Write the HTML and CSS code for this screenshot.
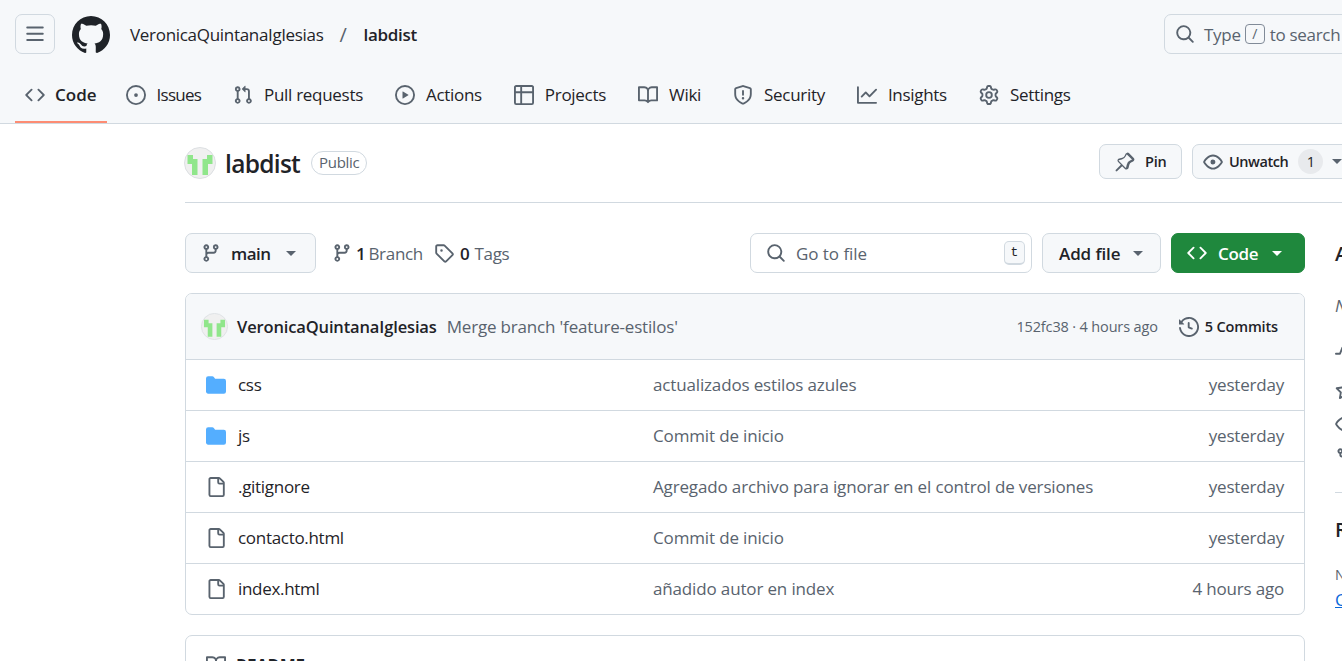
FILE: index.html
```html
<!DOCTYPE html>
<html lang="en">
<head>
    <meta charset="UTF-8">
    <meta name="viewport" content="width=device-width, initial-scale=1.0">
    <title>VeronicaQuintanaIglesias/labdist</title>
    <link rel="stylesheet" href="styles.css">
</head>
<body>

    <!-- Icon sheet -->
    <svg class="icon-sheet" xmlns="http://www.w3.org/2000/svg">
        <symbol id="i-bars" viewBox="0 0 16 16"><path d="M1 2.75A.75.75 0 0 1 1.75 2h12.5a.75.75 0 0 1 0 1.5H1.75A.75.75 0 0 1 1 2.75Zm0 5A.75.75 0 0 1 1.75 7h12.5a.75.75 0 0 1 0 1.5H1.75A.75.75 0 0 1 1 7.75ZM1.75 12h12.5a.75.75 0 0 1 0 1.5H1.75a.75.75 0 0 1 0-1.5Z"/></symbol>
        <symbol id="i-mark" viewBox="0 0 16 16"><path d="M8 0c4.42 0 8 3.58 8 8a8.013 8.013 0 0 1-5.45 7.59c-.4.08-.55-.17-.55-.38 0-.27.01-1.13.01-2.2 0-.75-.25-1.23-.54-1.48 1.78-.2 3.65-.88 3.65-3.95 0-.88-.31-1.59-.82-2.15.08-.2.36-1.02-.08-2.12 0 0-.67-.22-2.2.82-.64-.18-1.32-.27-2-.27-.68 0-1.36.09-2 .27-1.53-1.03-2.2-.82-2.2-.82-.44 1.1-.16 1.92-.08 2.12-.51.56-.82 1.28-.82 2.15 0 3.06 1.86 3.75 3.64 3.95-.23.2-.44.55-.51 1.07-.46.21-1.61.55-2.33-.66-.15-.24-.6-.83-1.23-.82-.67.01-.27.38.01.53.34.19.73.9.82 1.13.16.45.68 1.31 2.69.94 0 .67.01 1.3.01 1.49 0 .21-.15.45-.55.38A7.995 7.995 0 0 1 0 8c0-4.42 3.58-8 8-8Z"/></symbol>
        <symbol id="i-code" viewBox="0 0 16 16"><path d="m11.28 3.22 4.25 4.25a.75.75 0 0 1 0 1.06l-4.25 4.25a.749.749 0 0 1-1.275-.326.749.749 0 0 1 .215-.734L13.94 8l-3.72-3.72a.749.749 0 0 1 .326-1.275.749.749 0 0 1 .734.215Zm-6.56 0a.751.751 0 0 1 1.042.018.751.751 0 0 1 .018 1.042L2.06 8l3.72 3.72a.749.749 0 0 1-.326 1.275.749.749 0 0 1-.734-.215L.47 8.53a.75.75 0 0 1 0-1.06Z"/></symbol>
        <symbol id="i-issue" viewBox="0 0 16 16"><path d="M8 9.5a1.5 1.5 0 1 0 0-3 1.5 1.5 0 0 0 0 3Z"/><path d="M8 0a8 8 0 1 1 0 16A8 8 0 0 1 8 0ZM1.5 8a6.5 6.5 0 1 0 13 0 6.5 6.5 0 0 0-13 0Z"/></symbol>
        <symbol id="i-pull" viewBox="0 0 16 16"><path d="M1.5 3.25a2.25 2.25 0 1 1 3 2.122v5.256a2.251 2.251 0 1 1-1.5 0V5.372A2.25 2.25 0 0 1 1.5 3.25Zm5.677-.177L9.573.677A.25.25 0 0 1 10 .854V2.5h1A2.5 2.5 0 0 1 13.5 5v5.628a2.251 2.251 0 1 1-1.5 0V5a1 1 0 0 0-1-1h-1v1.646a.25.25 0 0 1-.427.177L7.177 3.427a.25.25 0 0 1 0-.354ZM3.75 2.5a.75.75 0 1 0 0 1.5.75.75 0 0 0 0-1.5Zm0 9.5a.75.75 0 1 0 0 1.5.75.75 0 0 0 0-1.5Zm8.25.75a.75.75 0 1 0 1.5 0 .75.75 0 0 0-1.5 0Z"/></symbol>
        <symbol id="i-play" viewBox="0 0 16 16"><path d="M8 0a8 8 0 1 1 0 16A8 8 0 0 1 8 0ZM1.5 8a6.5 6.5 0 1 0 13 0 6.5 6.5 0 0 0-13 0Zm4.879-2.773 4.264 2.559a.25.25 0 0 1 0 .428l-4.264 2.559A.25.25 0 0 1 6 10.559V5.442a.25.25 0 0 1 .379-.215Z"/></symbol>
        <symbol id="i-table" viewBox="0 0 16 16"><path d="M0 1.75C0 .784.784 0 1.75 0h12.5C15.216 0 16 .784 16 1.75v12.5A1.75 1.75 0 0 1 14.25 16H1.75A1.75 1.75 0 0 1 0 14.25ZM6.5 6.5v8h7.75a.25.25 0 0 0 .25-.25V6.5Zm8-1.5V1.75a.25.25 0 0 0-.25-.25H6.5V5Zm-13 1.5v7.75c0 .138.112.25.25.25H5v-8ZM5 5V1.5H1.75a.25.25 0 0 0-.25.25V5Z"/></symbol>
        <symbol id="i-book" viewBox="0 0 16 16"><path d="M0 1.75A.75.75 0 0 1 .75 1h4.253c1.227 0 2.317.59 3 1.501A3.743 3.743 0 0 1 11.006 1h4.245a.75.75 0 0 1 .75.75v10.5a.75.75 0 0 1-.75.75h-4.507a2.25 2.25 0 0 0-1.591.659l-.622.621a.75.75 0 0 1-1.06 0l-.622-.621A2.25 2.25 0 0 0 5.258 13H.75a.75.75 0 0 1-.75-.75Zm7.251 10.324.004-5.073-.002-2.253A2.25 2.25 0 0 0 5.003 2.5H1.5v9h3.757a3.75 3.75 0 0 1 1.994.574ZM8.755 4.75l-.004 7.322a3.752 3.752 0 0 1 1.992-.572H14.5v-9h-3.495a2.25 2.25 0 0 0-2.25 2.25Z"/></symbol>
        <symbol id="i-shield" viewBox="0 0 16 16"><path d="M7.467.133a1.748 1.748 0 0 1 1.066 0l5.25 1.68A1.75 1.75 0 0 1 15 3.48V7c0 1.566-.32 3.182-1.303 4.682-.983 1.498-2.585 2.813-5.032 3.855a1.697 1.697 0 0 1-1.33 0c-2.447-1.042-4.049-2.357-5.032-3.855C1.32 10.182 1 8.566 1 7V3.48a1.75 1.75 0 0 1 1.217-1.667Zm.61 1.429a.25.25 0 0 0-.153 0l-5.25 1.68a.25.25 0 0 0-.174.238V7c0 1.358.275 2.666 1.057 3.86.784 1.194 2.121 2.34 4.366 3.297a.196.196 0 0 0 .154 0c2.245-.956 3.582-2.104 4.366-3.298C13.225 9.666 13.5 8.36 13.5 7V3.48a.251.251 0 0 0-.174-.237l-5.25-1.68ZM8.75 4.75v3a.75.75 0 0 1-1.5 0v-3a.75.75 0 0 1 1.5 0ZM9 10.5a1 1 0 1 1-2 0 1 1 0 0 1 2 0Z"/></symbol>
        <symbol id="i-graph" viewBox="0 0 16 16"><path d="M1.5 1.75V13.5h13.75a.75.75 0 0 1 0 1.5H.75a.75.75 0 0 1-.75-.75V1.75a.75.75 0 0 1 1.5 0Zm14.28 2.53-5.25 5.25a.75.75 0 0 1-1.06 0L7 7.06 4.28 9.78a.751.751 0 0 1-1.042-.018.751.751 0 0 1-.018-1.042l3.25-3.25a.75.75 0 0 1 1.06 0L10 7.94l4.72-4.72a.751.751 0 0 1 1.042.018.751.751 0 0 1 .018 1.042Z"/></symbol>
        <symbol id="i-gear" viewBox="0 0 16 16"><path d="M8 0a8.2 8.2 0 0 1 .701.031C9.444.095 9.99.645 10.16 1.29l.288 1.107c.018.066.079.158.212.224.231.114.454.243.668.386.123.082.233.09.299.071l1.103-.303c.644-.176 1.392.021 1.82.63.27.385.506.792.704 1.218.315.675.111 1.422-.364 1.891l-.814.806c-.049.048-.098.147-.088.294.016.257.016.515 0 .772-.01.147.038.246.088.294l.814.806c.475.469.679 1.216.364 1.891a7.977 7.977 0 0 1-.704 1.217c-.428.61-1.176.807-1.82.63l-1.102-.302c-.067-.019-.177-.011-.3.071a5.909 5.909 0 0 1-.668.386c-.133.066-.194.158-.211.224l-.29 1.106c-.168.646-.715 1.196-1.458 1.26a8.006 8.006 0 0 1-1.402 0c-.743-.064-1.289-.614-1.458-1.26l-.289-1.106c-.018-.066-.079-.158-.212-.224a5.738 5.738 0 0 1-.668-.386c-.123-.082-.233-.09-.299-.071l-1.103.303c-.644.176-1.392-.021-1.82-.63a8.12 8.12 0 0 1-.704-1.218c-.315-.675-.111-1.422.363-1.891l.815-.806c.05-.048.098-.147.088-.294a6.214 6.214 0 0 1 0-.772c.01-.147-.038-.246-.088-.294l-.815-.806C.635 6.045.431 5.298.746 4.623a7.92 7.92 0 0 1 .704-1.217c.428-.61 1.176-.807 1.82-.63l1.102.302c.067.019.177.011.3-.071.214-.143.437-.272.668-.386.133-.066.194-.158.211-.224l.29-1.106C6.009.645 6.556.095 7.299.03 7.53.01 7.764 0 8 0Zm-.571 1.525c-.036.003-.108.036-.137.146l-.289 1.105c-.147.561-.549.967-.998 1.189-.173.086-.34.183-.5.29-.417.278-.97.423-1.529.27l-1.103-.303c-.109-.03-.175.016-.195.045-.22.312-.412.644-.573.99-.014.031-.021.11.059.19l.815.806c.411.406.562.957.53 1.456a4.709 4.709 0 0 0 0 .582c.032.499-.119 1.05-.53 1.456l-.815.806c-.081.08-.073.159-.059.19.162.346.353.677.573.989.02.03.085.076.195.046l1.102-.303c.56-.153 1.113-.008 1.53.27.161.107.328.204.501.29.447.222.85.629.997 1.189l.289 1.105c.029.109.101.143.137.146a6.6 6.6 0 0 0 1.142 0c.036-.003.108-.036.137-.146l.289-1.105c.147-.561.549-.967.998-1.189.173-.086.34-.183.5-.29.417-.278.97-.423 1.529-.27l1.103.303c.109.029.175-.016.195-.045.22-.313.411-.644.573-.99.014-.031.021-.11-.059-.19l-.815-.806c-.411-.406-.562-.957-.53-1.456a4.709 4.709 0 0 0 0-.582c-.032-.499.119-1.05.53-1.456l.815-.806c.081-.08.073-.159.059-.19a6.464 6.464 0 0 0-.573-.989c-.02-.03-.085-.076-.195-.046l-1.102.303c-.56.153-1.113.008-1.53-.27a4.44 4.44 0 0 0-.501-.29c-.447-.222-.85-.629-.997-1.189l-.289-1.105c-.029-.11-.101-.143-.137-.146a6.6 6.6 0 0 0-1.142 0ZM11 8a3 3 0 1 1-6 0 3 3 0 0 1 6 0ZM9.5 8a1.5 1.5 0 1 0-3.001.001A1.5 1.5 0 0 0 9.5 8Z"/></symbol>
        <symbol id="i-search" viewBox="0 0 16 16"><path d="M10.68 11.74a6 6 0 0 1-7.922-8.982 6 6 0 0 1 8.982 7.922l3.04 3.04a.749.749 0 0 1-.326 1.275.749.749 0 0 1-.734-.215ZM11.5 7a4.499 4.499 0 1 0-8.997 0A4.499 4.499 0 0 0 11.5 7Z"/></symbol>
        <symbol id="i-pin" viewBox="0 0 16 16"><path d="m11.294.984 3.722 3.722a1.75 1.75 0 0 1-.504 2.826l-1.327.613a3.089 3.089 0 0 0-1.707 2.084l-.584 2.454c-.317 1.332-1.972 1.8-2.94.832L5.75 11.311 1.78 15.28a.749.749 0 0 1-1.275-.326.749.749 0 0 1 .215-.734L4.69 10.25 2.487 8.048c-.968-.968-.5-2.623.832-2.94l2.454-.584a3.089 3.089 0 0 0 2.084-1.707l.613-1.327a1.75 1.75 0 0 1 2.824-.506Zm-2.07 1.17-.612 1.326a4.59 4.59 0 0 1-3.097 2.537l-2.454.584a.25.25 0 0 0-.118.42l5.5 5.5a.25.25 0 0 0 .42-.118l.584-2.454a4.59 4.59 0 0 1 2.537-3.097l1.326-.611a.25.25 0 0 0 .072-.404l-3.722-3.722a.25.25 0 0 0-.404.072Z"/></symbol>
        <symbol id="i-eye" viewBox="0 0 16 16"><path d="M8 2c1.981 0 3.671.992 4.933 2.078 1.27 1.091 2.187 2.345 2.637 3.023a1.62 1.62 0 0 1 0 1.798c-.45.678-1.367 1.932-2.637 3.023C11.67 13.008 9.981 14 8 14c-1.981 0-3.671-.992-4.933-2.078C1.797 10.83.88 9.576.43 8.898a1.62 1.62 0 0 1 0-1.798c.45-.677 1.367-1.931 2.637-3.022C4.33 2.992 6.019 2 8 2ZM1.679 7.932a.12.12 0 0 0 0 .136c.411.622 1.241 1.75 2.366 2.717C5.176 11.758 6.527 12.5 8 12.5c1.473 0 2.825-.742 3.955-1.715 1.124-.967 1.954-2.096 2.366-2.717a.12.12 0 0 0 0-.136c-.412-.621-1.242-1.75-2.366-2.717C10.824 4.242 9.473 3.5 8 3.5c-1.473 0-2.825.742-3.955 1.715-1.124.967-1.954 2.096-2.366 2.717ZM8 10a2 2 0 1 1-.001-3.999A2 2 0 0 1 8 10Z"/></symbol>
        <symbol id="i-branch" viewBox="0 0 16 16"><path d="M9.5 3.25a2.25 2.25 0 1 1 3 2.122V6A2.5 2.5 0 0 1 10 8.5H6a1 1 0 0 0-1 1v1.128a2.251 2.251 0 1 1-1.5 0V5.372a2.25 2.25 0 1 1 1.5 0v1.836A2.493 2.493 0 0 1 6 7h4a1 1 0 0 0 1-1v-.628A2.25 2.25 0 0 1 9.5 3.25Zm-6 0a.75.75 0 1 0 1.5 0 .75.75 0 0 0-1.5 0Zm8.25-.75a.75.75 0 1 0 0 1.5.75.75 0 0 0 0-1.5ZM4.25 12a.75.75 0 1 0 0 1.5.75.75 0 0 0 0-1.5Z"/></symbol>
        <symbol id="i-tag" viewBox="0 0 16 16"><path d="M1 7.775V2.75C1 1.784 1.784 1 2.75 1h5.025c.464 0 .91.184 1.238.513l6.25 6.25a1.75 1.75 0 0 1 0 2.474l-5.026 5.026a1.75 1.75 0 0 1-2.474 0l-6.25-6.25A1.752 1.752 0 0 1 1 7.775Zm1.5 0c0 .066.026.13.073.177l6.25 6.25a.25.25 0 0 0 .354 0l5.025-5.025a.25.25 0 0 0 0-.354l-6.25-6.25a.25.25 0 0 0-.177-.073H2.75a.25.25 0 0 0-.25.25ZM6 5a1 1 0 1 1 0 2 1 1 0 0 1 0-2Z"/></symbol>
        <symbol id="i-history" viewBox="0 0 16 16"><path d="m.427 1.927 1.215 1.215a8.002 8.002 0 1 1-1.6 5.685.75.75 0 1 1 1.493-.154 6.5 6.5 0 1 0 1.18-4.458l1.358 1.358A.25.25 0 0 1 3.896 6H.25A.25.25 0 0 1 0 5.75V2.104a.25.25 0 0 1 .427-.177ZM7.75 4a.75.75 0 0 1 .75.75v2.992l2.028.812a.75.75 0 0 1-.557 1.392l-2.5-1A.751.751 0 0 1 7 8.25v-3.5A.75.75 0 0 1 7.75 4Z"/></symbol>
        <symbol id="i-folder" viewBox="0 0 16 16"><path d="M1.75 1A1.75 1.75 0 0 0 0 2.75v10.5C0 14.216.784 15 1.75 15h12.5A1.75 1.75 0 0 0 16 13.25v-8.5A1.75 1.75 0 0 0 14.25 3H7.5a.25.25 0 0 1-.2-.1l-.9-1.2C6.07 1.26 5.55 1 5 1H1.75Z"/></symbol>
        <symbol id="i-file" viewBox="0 0 16 16"><path d="M2 1.75C2 .784 2.784 0 3.75 0h6.586c.464 0 .909.184 1.237.513l2.914 2.914c.329.328.513.773.513 1.237v9.586A1.75 1.75 0 0 1 13.25 16h-9.5A1.75 1.75 0 0 1 2 14.25Zm1.75-.25a.25.25 0 0 0-.25.25v12.5c0 .138.112.25.25.25h9.5a.25.25 0 0 0 .25-.25V6h-2.75A1.75 1.75 0 0 1 9 4.25V1.5Zm6.75.062V4.25c0 .138.112.25.25.25h2.688l-.011-.013-2.914-2.914-.013-.011Z"/></symbol>
        <symbol id="i-pulse" viewBox="0 0 16 16"><path d="M6 2c.306 0 .582.187.696.471L10 10.731l1.304-3.26A.751.751 0 0 1 12 7h3.25a.75.75 0 0 1 0 1.5h-2.742l-1.812 4.528a.751.751 0 0 1-1.392 0L6 4.77 4.696 8.03A.75.75 0 0 1 4 8.5H.75a.75.75 0 0 1 0-1.5h2.742l1.812-4.529A.751.751 0 0 1 6 2Z"/></symbol>
        <symbol id="i-star" viewBox="0 0 16 16"><path d="M8 .25a.75.75 0 0 1 .673.418l1.882 3.815 4.21.612a.75.75 0 0 1 .416 1.279l-3.046 2.97.719 4.192a.751.751 0 0 1-1.088.791L8 12.347l-3.766 1.98a.75.75 0 0 1-1.088-.79l.72-4.194L.818 6.374a.75.75 0 0 1 .416-1.28l4.21-.611L7.327.668A.75.75 0 0 1 8 .25Zm0 2.445L6.615 5.5a.75.75 0 0 1-.564.41l-3.097.45 2.24 2.184a.75.75 0 0 1 .216.664l-.528 3.084 2.769-1.456a.75.75 0 0 1 .698 0l2.77 1.456-.53-3.084a.75.75 0 0 1 .216-.664l2.24-2.183-3.096-.45a.75.75 0 0 1-.564-.41L8 2.694Z"/></symbol>
        <symbol id="i-fork" viewBox="0 0 16 16"><path d="M5 5.372v.878c0 .414.336.75.75.75h4.5a.75.75 0 0 0 .75-.75v-.878a2.25 2.25 0 1 1 1.5 0v.878a2.25 2.25 0 0 1-2.25 2.25h-1.5v2.128a2.251 2.251 0 1 1-1.5 0V8.5h-1.5A2.25 2.25 0 0 1 3.5 6.25v-.878a2.25 2.25 0 1 1 1.5 0ZM5 3.25a.75.75 0 1 0-1.5 0 .75.75 0 0 0 1.5 0Zm6.75.75a.75.75 0 1 0 0-1.5.75.75 0 0 0 0 1.5Zm-3 8.75a.75.75 0 1 0-1.5 0 .75.75 0 0 0 1.5 0Z"/></symbol>
        <symbol id="i-avatar" viewBox="0 0 32 32">
            <circle cx="16" cy="16" r="15.5" fill="#f0f0f0" stroke="#dcdfe2"/>
            <path fill="#90e68b" d="M3.5 8H9v4h4.5v16H8V17H3.5ZM28.5 8H23v4h-4.5v16H24V17h4.5Z"/>
        </symbol>
    </svg>

    <!-- Barra superior -->
    <header class="top">
        <div class="top-row">
            <button class="icon-btn"><svg class="ico"><use href="#i-bars"/></svg></button>
            <svg class="logo"><use href="#i-mark"/></svg>
            <span class="crumb">VeronicaQuintanaIglesias</span>
            <span class="crumb-sep">/</span>
            <strong class="crumb-repo">labdist</strong>
            <div class="top-search">
                <svg class="ico"><use href="#i-search"/></svg>
                <span>Type</span><kbd class="slash">/</kbd><span>to search</span>
            </div>
        </div>
        <nav class="tabs">
            <a class="tab tab-active"><svg class="ico"><use href="#i-code"/></svg>Code</a>
            <a class="tab tab-issues"><svg class="ico"><use href="#i-issue"/></svg>Issues</a>
            <a class="tab"><svg class="ico"><use href="#i-pull"/></svg>Pull requests</a>
            <a class="tab"><svg class="ico"><use href="#i-play"/></svg>Actions</a>
            <a class="tab"><svg class="ico"><use href="#i-table"/></svg>Projects</a>
            <a class="tab"><svg class="ico"><use href="#i-book"/></svg>Wiki</a>
            <a class="tab"><svg class="ico"><use href="#i-shield"/></svg>Security</a>
            <a class="tab"><svg class="ico"><use href="#i-graph"/></svg>Insights</a>
            <a class="tab"><svg class="ico"><use href="#i-gear"/></svg>Settings</a>
        </nav>
    </header>

    <main class="page">
        <!-- Nombre del repositorio -->
        <div class="repo-head">
            <svg class="avatar"><use href="#i-avatar"/></svg>
            <h1 class="repo-name">labdist</h1>
            <span class="badge">Public</span>
            <button class="btn btn-small btn-pin"><svg class="ico"><use href="#i-pin"/></svg>Pin</button>
            <button class="btn btn-small btn-watch">
                <svg class="ico"><use href="#i-eye"/></svg>Unwatch<span class="count">1</span><i class="caret"></i>
            </button>
        </div>

        <div class="columns">
            <section class="content">
                <div class="toolbar">
                    <button class="btn btn-branch"><svg class="ico"><use href="#i-branch"/></svg>main<i class="caret"></i></button>
                    <a class="meta-link meta-branch"><svg class="ico"><use href="#i-branch"/></svg><b>1</b> Branch</a>
                    <a class="meta-link"><svg class="ico"><use href="#i-tag"/></svg><b>0</b> Tags</a>
                    <div class="go-file">
                        <svg class="ico"><use href="#i-search"/></svg>
                        <span>Go to file</span>
                        <kbd class="key-t">t</kbd>
                    </div>
                    <button class="btn btn-add">Add file<i class="caret"></i></button>
                    <button class="btn btn-code"><svg class="ico"><use href="#i-code"/></svg>Code<i class="caret"></i></button>
                </div>

                <!-- Lista de archivos -->
                <div class="files">
                    <div class="commit-row">
                        <svg class="avatar-small"><use href="#i-avatar"/></svg>
                        <strong class="commit-author">VeronicaQuintanaIglesias</strong>
                        <span class="commit-msg">Merge branch 'feature-estilos'</span>
                        <span class="commit-hash">152fc38 · 4 hours ago</span>
                        <span class="commit-count"><svg class="ico"><use href="#i-history"/></svg>5 Commits</span>
                    </div>
                    <div class="file-row">
                        <svg class="ico folder"><use href="#i-folder"/></svg>
                        <span class="file-name">css</span>
                        <span class="file-msg">actualizados estilos azules</span>
                        <span class="file-time">yesterday</span>
                    </div>
                    <div class="file-row">
                        <svg class="ico folder"><use href="#i-folder"/></svg>
                        <span class="file-name">js</span>
                        <span class="file-msg">Commit de inicio</span>
                        <span class="file-time">yesterday</span>
                    </div>
                    <div class="file-row">
                        <svg class="ico"><use href="#i-file"/></svg>
                        <span class="file-name">.gitignore</span>
                        <span class="file-msg">Agregado archivo para ignorar en el control de versiones</span>
                        <span class="file-time">yesterday</span>
                    </div>
                    <div class="file-row">
                        <svg class="ico"><use href="#i-file"/></svg>
                        <span class="file-name">contacto.html</span>
                        <span class="file-msg">Commit de inicio</span>
                        <span class="file-time">yesterday</span>
                    </div>
                    <div class="file-row">
                        <svg class="ico"><use href="#i-file"/></svg>
                        <span class="file-name">index.html</span>
                        <span class="file-msg">añadido autor en index</span>
                        <span class="file-time">4 hours ago</span>
                    </div>
                </div>

                <div class="readme">
                    <svg class="ico"><use href="#i-book"/></svg><strong>README</strong>
                </div>
            </section>

            <aside class="side">
                <h2 class="side-title">About</h2>
                <p class="side-desc">No description, website, or topics provided.</p>
                <ul class="side-list">
                    <li><svg class="ico"><use href="#i-pulse"/></svg>Activity</li>
                    <li><svg class="ico"><use href="#i-star"/></svg>0 stars</li>
                    <li><svg class="ico"><use href="#i-eye"/></svg>1 watching</li>
                    <li><svg class="ico"><use href="#i-fork"/></svg>0 forks</li>
                </ul>
                <h2 class="side-title side-releases">Releases</h2>
                <p class="side-note">No releases published</p>
                <a class="side-link">Create a new release</a>
            </aside>
        </div>
    </main>
</body>
</html>
```

FILE: styles.css
```css
* {
    box-sizing: border-box;
    margin: 0;
    padding: 0;
}

html, body {
    height: 100%;
    overflow: hidden;
}

body {
    font-family: 'Open Sans', 'Noto Sans', sans-serif;
    font-size: 17px;
    letter-spacing: -0.3px;
    color: #1f2328;
    background-color: #fff;
}

button {
    font: inherit;
    letter-spacing: inherit;
    color: inherit;
}

.icon-sheet {
    display: none;
}

.ico {
    width: 20px;
    height: 20px;
    fill: #59636e;
    flex: none;
}

/* Barra superior */
.top {
    height: 124px;
    background-color: #f6f8fa;
    border-bottom: 1px solid #d1d9e0;
    padding: 14px 0 0 15px;
}

.top-row {
    display: flex;
    align-items: center;
    height: 40px;
}

.icon-btn {
    width: 40px;
    height: 40px;
    display: flex;
    align-items: center;
    justify-content: center;
    background: transparent;
    border: 1px solid #d1d9e0;
    border-radius: 7px;
}

.logo {
    width: 38px;
    height: 38px;
    margin: 2px 20px 0 17px;
    fill: #1f2328;
}

.crumb-sep {
    margin: 0 17px 0 16px;
    color: #59636e;
    font-size: 20px;
}

.crumb-repo {
    font-weight: 600;
}

.top-search {
    display: flex;
    align-items: center;
    width: 190px;
    height: 40px;
    margin-left: auto;
    margin-right: -12px;
    padding-left: 10px;
    border: 1px solid #d1d9e0;
    border-radius: 7px;
    color: #59636e;
    white-space: nowrap;
}

.top-search .ico {
    margin-right: 9px;
}

.slash {
    width: 20px;
    height: 20px;
    margin: 0 5px 0 4px;
    border: 1px solid #818b98;
    border-radius: 4px;
    font: inherit;
    font-size: 14px;
    line-height: 18px;
    text-align: center;
}

.tabs {
    display: flex;
    gap: 12px;
    margin-top: 16px;
}

.tab {
    display: flex;
    align-items: center;
    gap: 11px;
    height: 53px;
    padding: 0 10px 2px;
    white-space: nowrap;
    border-bottom: 2px solid transparent;
}

.tab-active {
    gap: 10px;
    margin-right: -3px;
    font-weight: 600;
    letter-spacing: 0;
    border-bottom-color: #fd8c73;
}

.tab-issues {
    letter-spacing: -0.75px;
}

/* Cabecera del repositorio */
.page {
    padding-left: 185px;
}

.repo-head {
    display: flex;
    align-items: center;
    width: 1165px;
    height: 79px;
    padding-bottom: 3px;
    border-bottom: 1px solid #d1d9e0;
}

.avatar {
    width: 32px;
    height: 32px;
    margin: 3px 0 0 -1px;
}

.repo-name {
    margin: 3px 0 0 9px;
    font-size: 24.5px;
    font-weight: 600;
    letter-spacing: -0.7px;
}

.badge {
    margin: 3px 0 0 11px;
    padding: 0 7px;
    height: 24px;
    line-height: 21px;
    font-size: 15px;
    color: #59636e;
    border: 1px solid #d1d9e0;
    border-radius: 12px;
}

.btn {
    display: flex;
    align-items: center;
    height: 40px;
    background-color: #f6f8fa;
    border: 1px solid #d1d9e0;
    border-radius: 7px;
    font-weight: 600;
    white-space: nowrap;
}

.btn-small {
    height: 35px;
    font-size: 14.5px;
    letter-spacing: -0.2px;
}

.btn-pin {
    width: 83px;
    margin-left: auto;
    padding-left: 15px;
    gap: 10px;
}

.btn-watch {
    width: 158px;
    margin-left: 10px;
    padding-left: 10px;
    gap: 6px;
    letter-spacing: -0.45px;
}

.count {
    width: 25px;
    height: 25px;
    margin-left: 4px;
    line-height: 25px;
    text-align: center;
    font-weight: 400;
    border-radius: 50%;
    background-color: #e8eaed;
}

.caret {
    width: 0;
    height: 0;
    margin-left: 10px;
    border-left: 5px solid transparent;
    border-right: 5px solid transparent;
    border-top: 5px solid #59636e;
}

.btn-watch .caret {
    margin-left: 3px;
}

/* Columnas */
.columns {
    display: flex;
    gap: 30px;
    padding-top: 30px;
}

.content {
    width: 1120px;
    flex: none;
}

.toolbar {
    display: flex;
    align-items: center;
    height: 40px;
}

.btn-branch {
    width: 131px;
    padding-left: 15px;
    gap: 10px;
    letter-spacing: -0.5px;
}

.btn-branch .caret {
    margin-left: 5px;
}

.meta-link {
    display: flex;
    align-items: center;
    gap: 6px;
    margin-left: 11px;
    color: #59636e;
    white-space: nowrap;
}

.meta-link b {
    margin-right: -1px;
    color: #1f2328;
    font-weight: 600;
}

.meta-branch {
    margin-left: 16px;
    gap: 4px;
}

.go-file {
    display: flex;
    align-items: center;
    gap: 10px;
    width: 282px;
    height: 40px;
    margin-left: auto;
    padding: 0 6px 0 15px;
    border: 1px solid #d1d9e0;
    border-radius: 7px;
    letter-spacing: -0.05px;
    color: #59636e;
}

.key-t {
    width: 21px;
    height: 24px;
    margin-left: auto;
    font-family: 'Liberation Mono', monospace;
    font-size: 13px;
    line-height: 22px;
    text-align: center;
    color: #1f2328;
    background-color: #f6f8fa;
    border: 1px solid #d1d9e0;
    border-bottom-width: 2px;
    border-radius: 5px;
}

.btn-add {
    width: 119px;
    margin-left: 10px;
    padding-left: 16px;
    letter-spacing: -0.1px;
}

.btn-add .caret {
    margin-left: 13px;
}

.btn-code {
    width: 134px;
    margin-left: 10px;
    padding-left: 15px;
    gap: 11px;
    color: #fff;
    background-color: #1f883d;
    border-color: #1f883d;
}

.btn-code .ico {
    fill: #fff;
}

.btn-code .caret {
    margin-left: 3px;
    border-top-color: #fff;
}

/* Lista de archivos */
.files {
    margin-top: 20px;
    border: 1px solid #d1d9e0;
    border-radius: 7px;
    overflow: hidden;
}

.commit-row {
    display: flex;
    align-items: center;
    height: 65px;
    padding: 0 26px 0 15px;
    background-color: #f6f8fa;
}

.avatar-small {
    width: 27px;
    height: 27px;
}

.commit-author {
    margin-left: 9px;
    font-weight: 600;
    font-size: 16.5px;
    letter-spacing: -0.14px;
}

.commit-msg {
    margin-left: 10px;
    letter-spacing: -0.18px;
    color: #59636e;
}

.commit-hash {
    margin-left: auto;
    font-size: 14.5px;
    letter-spacing: -0.15px;
    color: #59636e;
}

.commit-count {
    display: flex;
    align-items: center;
    gap: 6px;
    margin-left: 21px;
    font-size: 14.5px;
    font-weight: 600;
    letter-spacing: -0.15px;
}

.file-row {
    display: grid;
    grid-template-columns: 20px 385px 1fr auto;
    align-items: center;
    height: 51px;
    padding: 0 20px;
    border-top: 1px solid #d1d9e0;
}

.folder {
    fill: #54aeff;
}

.file-name {
    margin: 0 0 2px 12px;
}

.file-msg {
    margin: 0 0 2px 42px;
    letter-spacing: -0.15px;
    color: #59636e;
}

.file-time {
    margin-bottom: 2px;
    letter-spacing: -0.2px;
    color: #59636e;
}

.readme {
    display: flex;
    align-items: center;
    gap: 10px;
    height: 60px;
    margin-top: 20px;
    padding-left: 20px;
    border: 1px solid #d1d9e0;
    border-radius: 7px;
}

/* Columna lateral, cortada por la ventana */
.side {
    width: 370px;
    flex: none;
    padding-top: 7px;
}

.side-title {
    font-size: 20px;
    font-weight: 600;
}

.side-desc {
    margin-top: 27px;
    font-style: italic;
    color: #59636e;
}

.side-list {
    list-style: none;
    margin-top: 20px;
    padding-bottom: 19px;
    border-bottom: 1px solid #d1d9e0;
    color: #59636e;
}

.side-list li {
    display: flex;
    align-items: center;
    gap: 10px;
    height: 33px;
}

.side-list li:first-child {
    margin-bottom: 4px;
}

.side-releases {
    margin-top: 23px;
}

.side-note {
    margin-top: 22px;
    font-size: 14px;
    color: #59636e;
}

.side-link {
    display: block;
    margin-top: 4px;
    color: #0969da;
    text-decoration: underline;
}
```
